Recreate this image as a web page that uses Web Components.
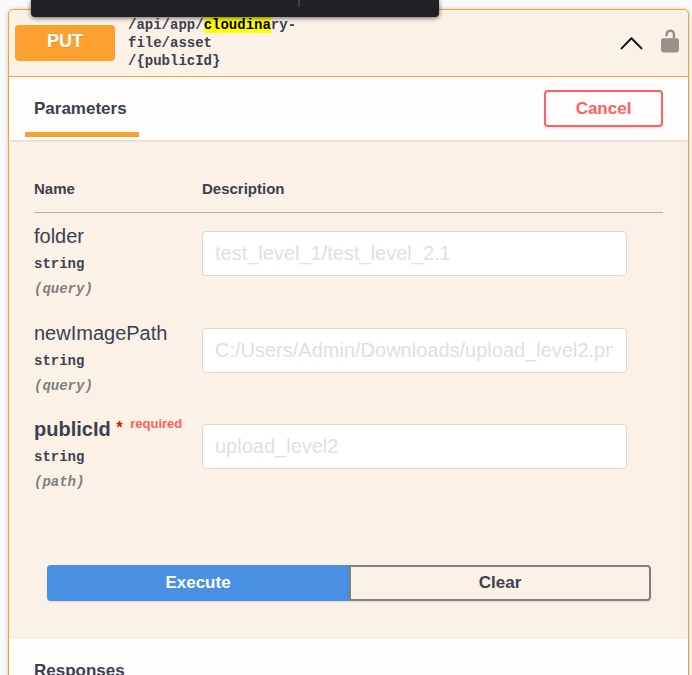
<!DOCTYPE html>
<html lang="en">
<head>
<meta charset="utf-8">
<meta name="viewport" content="width=device-width, initial-scale=1">
<title>PUT /api/app/cloudinary-file/asset/{publicId}</title>
<style>
  html { scrollbar-width: none; background: #fafafa; }
  body {
    margin: 0;
    padding: 9px 3px 0 8px;
    color: #3b4151;
    font-family: "Liberation Sans", Arial, sans-serif;
    --mono: "Liberation Mono", "DejaVu Sans Mono", monospace;
    --put: #fca130;
    --put-bg: #fbf1e6;
  }
</style>
</head>
<body>
<find-bar></find-bar>
<op-block>
  <op-summary slot="summary" method="PUT">/api/app/<mark>cloudina</mark>ry-<wbr>file/asset<wbr>/{publicId}</op-summary>
  <section-header><section-tab slot="title">Parameters</section-tab><action-button kind="cancel">Cancel</action-button></section-header>
  <param-table></param-table>
  <button-group></button-group>
  <section-header><section-tab slot="title" plain>Responses</section-tab></section-header>
</op-block>

<script>
const define = (name, html, setup) => {
  const template = document.createElement('template');
  template.innerHTML = html;
  customElements.define(name, class extends HTMLElement {
    constructor() {
      super();
      this.attachShadow({ mode: 'open' }).append(template.content.cloneNode(true));
    }
    connectedCallback() {
      if (setup) setup(this, this.shadowRoot);
    }
  });
};

/* Dark floating bar overlapping the top of the page */
define('find-bar', `
  <style>
    :host {
      display: flex; justify-content: center;
      position: absolute; z-index: 2; top: 0; left: 31px; right: 253px; height: 17px;
      box-sizing: border-box; padding-left: 128px;
      background: #202124; border-radius: 0 0 4px 4px;
      box-shadow: 0 1px 5px rgba(0,0,0,.6);
    }
    i { width: 2px; height: 7px; background: #3c4043; }
  </style>
  <i></i>`);

define('op-block', `
  <style>
    :host {
      display: block; border: 1px solid var(--put); border-radius: 5px;
      background: var(--put-bg); box-shadow: 0 0 4px rgba(0,0,0,.19);
    }
  </style>
  <slot name="summary"></slot><slot></slot>`);

define('op-summary', `
  <style>
    :host {
      display: flex; align-items: center; padding: 6px; position: relative;
      border-bottom: 1px solid var(--put);
    }
    .method {
      flex: none; width: 100px; height: 36px; box-sizing: border-box; padding: 0 0 4px;
      border: 0; border-radius: 4px; background: var(--put); color: #fff;
      font: bold 18px/32px "Liberation Sans", Arial, sans-serif;
      text-shadow: 0 1px 0 rgba(0,0,0,.1);
    }
    .path {
      flex: 0 1 170px; min-width: 0; margin: 0 auto 0 13px;
      font: bold 14px/18px var(--mono);
    }
    ::slotted(mark) { background: #ff0; color: #000; }
    .icon { flex: none; display: block; padding: 0; border: 0; background: none; }
    .icon svg { display: block; }
    .lock { margin: 0 3px 4px 18px; }
  </style>
  <button class="method"></button>
  <span class="path"><slot></slot></span>
  <button class="icon" aria-label="Collapse operation">
    <svg width="23" height="14" viewBox="0 0 23 14"><path d="M1.5 12.4 11.5 2.2 21.5 12.4" fill="none" stroke="#111" stroke-width="2" stroke-linecap="round" stroke-linejoin="round"/></svg>
  </button>
  <button class="icon lock" aria-label="Authorization unlocked">
    <svg width="18" height="24" viewBox="0 0 18 24" fill="#999189"><path d="M4.4 6.8V5.2A4.8 4.8 0 0 1 9.3.5a4.8 4.8 0 0 1 4.9 4.7V9.200H16A2 2 0 0 1 18 11.200V20.500Q18 23.400 15 23.400H3Q0 23.400 0 20.500V11.200A2 2 0 0 1 2 9.200H11.700V5.300A2.400 2.400 0 0 0 9.300 3 2.400 2.400 0 0 0 6.900 5.300V6.200Q6.900 7.600 5.600 7.600 4.400 7.600 4.400 6.800Z"/></svg>
  </button>`,
  (host, root) => { root.querySelector('.method').textContent = host.getAttribute('method'); });

define('section-header', `
  <style>
    :host {
      display: flex; align-items: stretch; justify-content: space-between;
      height: 63px; padding: 0 25px 0 16px;
      background: #fefdfb; box-shadow: 0 1px 2px rgba(0,0,0,.12);
    }
    .actions { display: flex; align-items: center; }
  </style>
  <slot name="title"></slot><div class="actions"><slot></slot></div>`);

define('section-tab', `
  <style>
    :host {
      display: flex; align-items: flex-end; box-sizing: border-box;
      margin-bottom: 3px; border-bottom: 5px solid var(--put); padding: 0 10px 0 9px;
      width: 114px;
    }
    :host([plain]) { border-bottom-color: transparent; }
    h4 { margin: 0 0 12px; font-size: 17px; line-height: 22px; }
  </style>
  <h4><slot></slot></h4>`);

define('action-button', `
  <style>
    :host { display: flex; flex: none; min-width: 0; }
    button {
      flex: 1; box-sizing: border-box; height: 36px; padding: 0 29px;
      border: 2px solid #808080; border-radius: 4px; background: transparent;
      color: inherit; font: bold 17px/20px "Liberation Sans", Arial, sans-serif;
      box-shadow: 0 1px 2px rgba(0,0,0,.1);
    }
    :host([kind=cancel]) button { height: 37px; width: 119px; padding: 0; border-color: #ff6060; color: #ff6060; }
    :host([kind=execute]), :host([kind=clear]) { flex: 1; }
    :host([kind=execute]) button { background: #4990e2; border-color: #4990e2; color: #fff; border-radius: 4px 0 0 4px; }
    :host([kind=clear]) button { border-radius: 0 4px 4px 0; }
  </style>
  <button><slot></slot></button>`);

define('param-name', `
  <style>
    :host { display: block; }
    .name { display: flex; font-size: 20px; line-height: 24px; }
    .required { font-weight: bold; }
    .star { color: #f00; font: bold 16px/24px var(--mono); margin-left: 4px; }
    .note { color: #ff6060; font-size: 13px; line-height: 14px; margin-left: 6px; }
    .type { font: bold 14px/18px var(--mono); margin-top: 7px; }
    .in { font: italic bold 14px/18px var(--mono); color: #808080; margin-top: 7px; }
  </style>
  <div class="name"></div><div class="type">string</div><div class="in"></div>`,
  (host, root) => {
    const name = root.querySelector('.name');
    name.textContent = host.getAttribute('name');
    root.querySelector('.in').textContent = '(' + host.getAttribute('in') + ')';
    if (host.hasAttribute('required')) {
      name.classList.add('required');
      name.insertAdjacentHTML('beforeend', '<span class="star">*</span><span class="note">required</span>');
    }
  });

define('param-input', `
  <style>
    :host { display: block; max-width: 425px; }
    input {
      display: block; box-sizing: border-box; width: 100%; height: 45px; padding: 0 13px 0 12px;
      border: 1px solid #d9d9d9; border-radius: 4px; background: #fff;
      font: 20px/24px "Liberation Sans", Arial, sans-serif; color: #3b4151;
    }
    input::placeholder { color: #e0e0e0; opacity: 1; }
  </style>
  <input type="text">`,
  (host, root) => {
    const input = root.querySelector('input');
    input.placeholder = host.getAttribute('placeholder');
    input.setAttribute('aria-label', host.getAttribute('label'));
  });

define('param-table', `
  <style>
    :host { display: block; padding: 25px 25px 0; }
    table { width: 100%; border-collapse: collapse; table-layout: fixed; }
    th { padding: 14px 0 13px; border-bottom: 1px solid #b5b0aa; font-size: 15px; line-height: 20px; text-align: left; }
    th:first-child { width: 168px; }
    td { height: 97px; box-sizing: border-box; padding: 11px 0 0; vertical-align: top; }
    td:last-child { padding-top: 18px; }
    tr:last-child td { padding-top: 10px; }
    tr:last-child td:last-child { padding-top: 17px; }
  </style>
  <table>
    <thead><tr><th scope="col">Name</th><th scope="col">Description</th></tr></thead>
    <tbody>
      <tr><td><param-name name="folder" in="query"></param-name></td><td><param-input label="folder" placeholder="test_level_1/test_level_2.1"></param-input></td></tr>
      <tr><td><param-name name="newImagePath" in="query"></param-name></td><td><param-input label="newImagePath" placeholder="C:/Users/Admin/Downloads/upload_level2.png"></param-input></td></tr>
      <tr><td><param-name name="publicId" in="path" required></param-name></td><td><param-input label="publicId" placeholder="upload_level2"></param-input></td></tr>
    </tbody>
  </table>`);

define('button-group', `
  <style>:host { display: flex; padding: 61px 37px 38px 38px; }</style>
  <action-button kind="execute">Execute</action-button><action-button kind="clear">Clear</action-button>`);
</script>
</body>
</html>
